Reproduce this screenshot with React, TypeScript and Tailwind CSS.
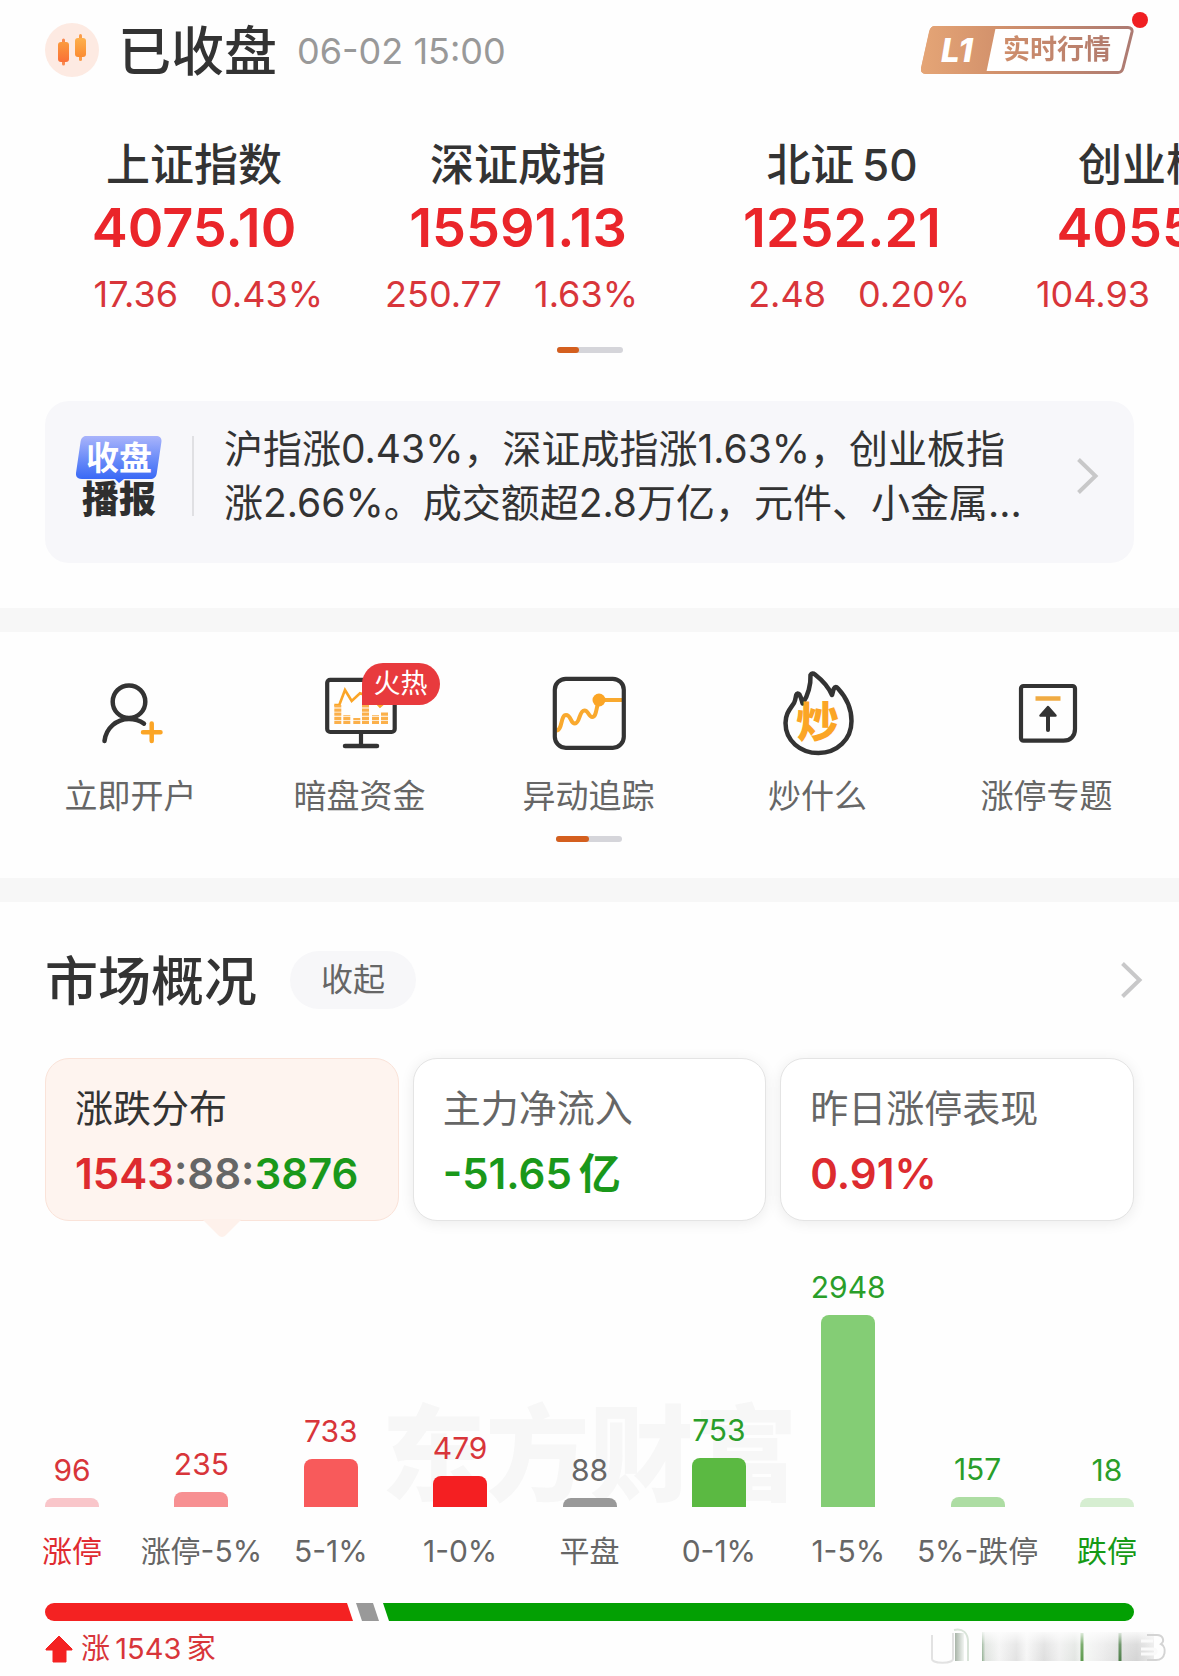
import clsx from "clsx";
import type { ReactNode } from "react";

const indices = [
  { name: "上证指数", value: "4075.10", change: "17.36", percent: "0.43%" },
  { name: "深证成指", value: "15591.13", change: "250.77", percent: "1.63%" },
  { name: "北证\u200950", value: "1252.21", change: "2.48", percent: "0.20%" },
  { name: "创业板指", value: "4055.78", change: "104.93", percent: "2.66%" },
];

const distribution = [
  { label: "涨停", count: 96, bar: "bg-[#f9c6ca]", text: "text-[#d8353a]", labelText: "text-[#e02b30]" },
  { label: "涨停-5%", count: 235, bar: "bg-[#f79092]", text: "text-[#d8353a]", labelText: "text-[#666]" },
  { label: "5-1%", count: 733, bar: "bg-[#f85a5b]", text: "text-[#d8353a]", labelText: "text-[#666]" },
  { label: "1-0%", count: 479, bar: "bg-[#f41f22]", text: "text-[#d8353a]", labelText: "text-[#666]" },
  { label: "平盘", count: 88, bar: "bg-[#999]", text: "text-[#666]", labelText: "text-[#666]" },
  { label: "0-1%", count: 753, bar: "bg-[#5bb942]", text: "text-[#2a9e2a]", labelText: "text-[#666]" },
  { label: "1-5%", count: 2948, bar: "bg-[#84cd75]", text: "text-[#2a9e2a]", labelText: "text-[#666]" },
  { label: "5%-跌停", count: 157, bar: "bg-[#addda3]", text: "text-[#2a9e2a]", labelText: "text-[#666]" },
  { label: "跌停", count: 18, bar: "bg-[#d6eed1]", text: "text-[#2a9e2a]", labelText: "text-[#159a15]" },
];

const MAX_BAR = 192;
const MIN_BAR = 9;
const maxCount = Math.max(...distribution.map((d) => d.count));

function barHeight(count: number) {
  return Math.max(MIN_BAR, Math.round((count / maxCount) * MAX_BAR));
}

function CandleIcon() {
  return (
    <svg width="54" height="54" viewBox="0 0 54 54" aria-hidden="true">
      <defs>
        <linearGradient id="candleA" x1="0" y1="0" x2="0" y2="1">
          <stop offset="0" stopColor="#fb9a3c" />
          <stop offset="1" stopColor="#fa7038" />
        </linearGradient>
        <linearGradient id="candleB" x1="0" y1="0" x2="0" y2="1">
          <stop offset="0" stopColor="#fdb04c" />
          <stop offset="1" stopColor="#fb8c32" />
        </linearGradient>
      </defs>
      <circle cx="27" cy="27" r="27" fill="#fdeae2" />
      <rect x="17" y="15.500" width="3" height="27" rx="1.500" fill="#f98a50" />
      <rect x="13" y="19" width="11" height="20" rx="3" fill="url(#candleA)" />
      <rect x="34" y="11" width="3" height="27" rx="1.500" fill="#fb9c48" />
      <rect x="30" y="15" width="11" height="19" rx="3" fill="url(#candleB)" />
    </svg>
  );
}

function Chevron() {
  return (
    <svg width="24" height="40" viewBox="0 0 24 40" fill="none" aria-hidden="true">
      <path d="M2.500 3.500 19.500 20 2.500 36.500" stroke="#c8c8c9" strokeWidth="4" />
    </svg>
  );
}

function OpenAccountIcon() {
  return (
    <svg width="92" height="92" viewBox="0 0 92 92" fill="none" strokeLinecap="round">
      <circle cx="44" cy="34.700" r="16.300" stroke="#333" strokeWidth="4.500" />
      <path d="M19.500 74C21 61 31.500 52 44 52c5.500 0 10.500 1.500 15 4.600" stroke="#333" strokeWidth="4.500" />
      <path d="M58 65.300h17.500M66.700 56.500v17.500" stroke="#fba526" strokeWidth="4.500" />
    </svg>
  );
}

function DarkPoolIcon() {
  return (
    <svg width="92" height="92" viewBox="0 0 92 92" fill="none">
      <rect x="13.200" y="12.800" width="67.500" height="52.200" rx="3" stroke="#333" strokeWidth="4.200" />
      <path d="M47 65v12" stroke="#333" strokeWidth="4.200" />
      <path d="M31 79h32" stroke="#333" strokeWidth="4.500" strokeLinecap="round" />
      <path d="M20.300 38h5L31 23l6.700 11 8.300-7.700L57 30l9 9.500 8-7" stroke="#fba526" strokeWidth="2.600" />
      <g stroke="#fbb04a" strokeWidth="7" strokeDasharray="3.200 0.900">
        <path d="M23.800 57V38" />
        <path d="M32.800 57v-9" />
        <path d="M42.800 57v-6" />
        <path d="M51.500 57V38" />
        <path d="M61.500 57v-9" />
        <path d="M70.500 57V45" />
      </g>
    </svg>
  );
}

function TrackIcon() {
  return (
    <svg width="92" height="92" viewBox="0 0 92 92" fill="none">
      <path
        d="M13.500 63.500c6 0 4-15.500 9.500-15.500s4 8.500 9 8.500 4-13 9.500-13c4 0 4 6.500 7.700 6.500C54 50 53 38 56.500 33H79"
        stroke="#f9a92e"
        strokeWidth="4"
      />
      <circle cx="56" cy="33" r="6.500" fill="#fba526" />
      <rect x="11.800" y="11.800" width="69" height="69" rx="11" stroke="#333" strokeWidth="4.200" />
    </svg>
  );
}

function FlameIcon() {
  return (
    <svg width="92" height="92" viewBox="0 0 92 92" fill="none">
      <path
        d="M38.500 8c1-1.800 2.600-2 4.500-.5C50 13 56.500 20 60 28c.8-2.500 1-4.500 2-6.500s2.500-1.800 3.800-.3C74 30 79.500 41 79.500 54c0 18.500-14.500 32-33 32S13.500 73.500 13.500 56c0-9.500 4.500-14 8.500-20 1.500-2.500 1.600-5.500 2.200-8 .6-2 2-2 3.200-.5 1.600 2.500 2.400 5.500 3.200 9C36 29 39 17 38.500 8Z"
        stroke="#333"
        strokeWidth="4.500"
        strokeLinejoin="round"
      />
      <text x="24" y="71" fontSize="43" fontWeight="900" fill="#fba526">
        炒
      </text>
    </svg>
  );
}

function LimitUpIcon() {
  return (
    <svg width="92" height="92" viewBox="0 0 92 92" fill="none">
      <path
        d="M22.500 19h49a2.500 2.500 0 0 1 2.500 2.500V62c0 7-4.500 11.700-11.500 11.700h-40a2.500 2.500 0 0 1-2.500-2.500v-49.700a2.500 2.500 0 0 1 2.500-2.500Z"
        stroke="#333"
        strokeWidth="4.200"
      />
      <path d="M34.500 31.500h25" stroke="#f0ab43" strokeWidth="4.500" />
      <path d="M47 46v17" stroke="#333" strokeWidth="4" strokeLinecap="round" />
      <path d="M47 40 39.500 48.500h15Z" fill="#333" stroke="#333" strokeWidth="2.500" strokeLinejoin="round" />
    </svg>
  );
}

const shortcuts = [
  { label: "立即开户", icon: OpenAccountIcon },
  { label: "暗盘资金", icon: DarkPoolIcon, badge: "火热" },
  { label: "异动追踪", icon: TrackIcon },
  { label: "炒什么", icon: FlameIcon },
  { label: "涨停专题", icon: LimitUpIcon },
];

function Pager({ half }: { half?: boolean }) {
  return (
    <div className="mx-auto h-1.5 w-[66px] overflow-hidden rounded-full bg-[#d5d5da]">
      <div className={clsx("h-full rounded-r-sm bg-[#d45f1e]", half ? "w-1/2" : "w-1/3")} />
    </div>
  );
}

function LevelOneButton() {
  return (
    <button type="button" className="relative flex h-12 w-[213px] items-center">
      <svg className="absolute inset-0" width="213" height="48" viewBox="0 0 213 48" fill="none" aria-hidden="true">
        <defs>
          <linearGradient id="copper" gradientUnits="userSpaceOnUse" x1="0" y1="0" x2="213" y2="0">
            <stop offset="0" stopColor="#e5a576" />
            <stop offset="0.350" stopColor="#d3926c" />
            <stop offset="1" stopColor="#ac7a72" />
          </linearGradient>
        </defs>
        <path
          d="M14 1.500h193c3 0 4.500 2 4 4.500l-9 36c-.8 3-2.200 4.500-5 4.500H5c-3 0-4.200-2-3.500-4.500l8-36c.7-3 2-4.500 4.500-4.500Z"
          fill="#fff"
          stroke="url(#copper)"
          strokeWidth="3"
        />
        <path d="M14 0h61L65 48H5c-4 0-5.600-2.500-5-5.500L8.500 5C9.300 1.500 11 0 14 0Z" fill="url(#copper)" />
      </svg>
      <span className="relative w-[82px] pl-5 text-left text-[33px] leading-8 font-extrabold text-white italic">L1</span>
      <span className="relative bg-linear-to-r from-[#cf8e6b] to-[#b27b6d] bg-clip-text text-[27px] leading-10 font-bold text-transparent">
        实时行情
      </span>
      <span className="absolute -top-3.5 -right-3.5 size-4 rounded-full bg-[#f01f22]" />
    </button>
  );
}

function ReportBadge() {
  return (
    <div className="relative h-20 w-[86px] shrink-0">
      <svg className="absolute inset-0" width="86" height="54" viewBox="0 0 86 54" aria-hidden="true">
        <defs>
          <linearGradient id="reportBlue" x1="0" y1="0" x2="0" y2="1">
            <stop offset="0" stopColor="#a9b4fb" />
            <stop offset="0.500" stopColor="#6a8bf8" />
            <stop offset="1" stopColor="#2f62f5" />
          </linearGradient>
        </defs>
        <path
          d="M10 0h70c4 0 6 2.500 5.400 6l-4.600 31c-.6 4-2.800 6-6.800 6H48l-5 4-4-4H6c-4 0-6.500-2-6-6L4.500 6C5 2.500 7 0 10 0Z"
          fill="url(#reportBlue)"
        />
      </svg>
      <div className="relative flex flex-col items-center">
        <span className="text-[33px] leading-[44px] font-bold text-white">收盘</span>
        <span className="text-[37px] leading-[40px] font-black text-[#2f2f2f]">播报</span>
      </div>
    </div>
  );
}

type StatCardProps = {
  title: string;
  active?: boolean;
  children: ReactNode;
};

function StatCard({ title, active, children }: StatCardProps) {
  return (
    <button
      type="button"
      className={clsx(
        "relative rounded-[24px] border pt-[25px] pb-[22px] pl-[29px] text-left",
        active
          ? "border-[#fae3d9] bg-[#fef4ef]"
          : "border-[#e4e4e4] bg-white shadow-[0_2px_14px_rgba(0,0,0,0.08)]"
      )}
    >
      <span className={clsx("block text-[38px] leading-[48px]", active ? "text-[#333]" : "text-[#666]")}>
        {title}
      </span>
      <span className="mt-[18px] block text-[42px] leading-[48px] font-semibold whitespace-nowrap">{children}</span>
      {active && (
        <svg className="absolute top-full left-1/2 -mt-px -translate-x-1/2" width="40" height="20" viewBox="0 0 40 20" aria-hidden="true">
          <path d="M0 0l16 16c2.500 2.500 5.500 2.500 8 0L40 0Z" fill="#fef1eb" />
        </svg>
      )}
    </button>
  );
}

// Blurred account signature in the lower right corner
function Signature() {
  return (
    <svg className="absolute right-2 bottom-2.5" width="242" height="40" viewBox="0 0 242 40" fill="none" aria-hidden="true">
      <defs>
        <linearGradient id="smear" x1="0" y1="0" x2="1" y2="0">
          <stop offset="0" stopColor="#8fae8f" />
          <stop offset="0.020" stopColor="#dfe3df" />
          <stop offset="0.100" stopColor="#f4f4f4" />
          <stop offset="0.200" stopColor="#e2e2e2" />
          <stop offset="0.260" stopColor="#f6f6f6" />
          <stop offset="0.360" stopColor="#dedede" />
          <stop offset="0.450" stopColor="#f0f0f0" />
          <stop offset="0.540" stopColor="#e2e5e2" />
          <stop offset="0.590" stopColor="#f6f8f6" />
          <stop offset="0.680" stopColor="#eeeeee" />
          <stop offset="0.780" stopColor="#e2e2e2" />
          <stop offset="0.900" stopColor="#d4d4d4" />
          <stop offset="1" stopColor="#ebebeb" />
        </linearGradient>
        <linearGradient id="smearFade" x1="0" y1="0" x2="0" y2="1">
          <stop offset="0" stopColor="#fefefe" stopOpacity="0.900" />
          <stop offset="0.450" stopColor="#fefefe" stopOpacity="0.200" />
          <stop offset="1" stopColor="#fefefe" stopOpacity="0" />
        </linearGradient>
        <linearGradient id="stem" x1="0" y1="0" x2="1" y2="0">
          <stop offset="0" stopColor="#a9b5a9" />
          <stop offset="1" stopColor="#f2f5f2" />
        </linearGradient>
      </defs>
      <path d="M3 8v24c0 5 21 5 21 0V6" fill="#fefefe" stroke="#e2e2e2" strokeWidth="2" />
      <rect x="26" y="6" width="9" height="28" fill="url(#stem)" />
      <path d="M25 3c9-2 14 3 14 12v19" stroke="#d9e4d9" strokeWidth="2" />
      <rect x="53" y="5" width="172" height="29" fill="url(#smear)" />
      <path d="M153 6v28" stroke="#5c9a4c" strokeWidth="3" />
      <path d="M191 6v28" stroke="#4f7f4a" strokeWidth="3" />
      <rect x="53" y="4" width="172" height="30" fill="url(#smearFade)" />
      <path d="M218 8h10c6 0 8 6 4 9 6 3 5 16-5 16h-9" stroke="#d4d4d4" strokeWidth="2" />
      <path d="M212 14h12M212 22h12c4 0 4 5 0 5h-12" stroke="#fafafa" strokeWidth="3" />
    </svg>
  );
}

export default function App() {
  return (
    <main className="relative min-h-screen overflow-hidden bg-[#fefefe] font-[Inter,'Noto_Sans_CJK_SC',sans-serif] text-[#333]">
      {/* 行情 */}
      <header className="flex items-center justify-between px-[45px] pt-[23px]">
        <div className="flex h-[54px] items-center">
          <CandleIcon />
          <h1 className="ml-[19px] pt-1 text-[53px] leading-[54px] font-medium">已收盘</h1>
          <time className="ml-5 pt-0.5 text-[36px] leading-[54px] text-[#999]">06-02 15:00</time>
        </div>
        <LevelOneButton />
      </header>

      <section className="mt-[60px] flex pl-8">
        {indices.map((item) => (
          <a key={item.name} href="#" className="w-[324px] shrink-0 text-center">
            <h2 className="text-[44px] leading-[56px] font-medium">{item.name}</h2>
            <p className="mt-[7px] text-[54px] leading-[56px] font-semibold text-[#ea252a]">{item.value}</p>
            <div className="mt-[18px] grid grid-cols-2 gap-8 text-[36px] leading-[40px] text-[#d8353a]">
              <span className="text-right">{item.change}</span>
              <span className="text-left">{item.percent}</span>
            </div>
          </a>
        ))}
      </section>

      <div className="mt-[33px]">
        <Pager />
      </div>

      <a href="#" className="mx-[45px] mt-12 flex h-[162px] items-center rounded-[24px] bg-[#f7f7fa] pr-[34px] pb-3 pl-[31px]">
        <ReportBadge />
        <div className="ml-[30px] h-20 w-0.5 shrink-0 bg-[#e0e0e3]" />
        <p className="ml-[30px] flex-1 text-[39px] leading-[54px] whitespace-nowrap">
          沪指涨0.43%，深证成指涨1.63%，创业板指
          <br />
          涨2.66%。成交额超2.8万亿，元件、小金属...
        </p>
        <Chevron />
      </a>

      <div className="mt-[45px] h-6 bg-[#f7f7f7]" />

      {/* 快捷入口 */}
      <nav className="pt-[35px] pr-[18px] pb-9 pl-4">
        <div className="grid grid-cols-5">
          {shortcuts.map((item) => {
            const Icon = item.icon;

            return (
              <a key={item.label} href="#" className="flex flex-col items-center">
                <span className="relative">
                  <Icon />
                  {item.badge && (
                    <span className="absolute -top-1 left-12 rounded-full rounded-bl-none bg-[#e83a3d] px-3 text-[27px] leading-[42px] whitespace-nowrap text-white">
                      {item.badge}
                    </span>
                  )}
                </span>
                <span className="mt-[17px] text-[33px] leading-[40px] text-[#666]">{item.label}</span>
              </a>
            );
          })}
        </div>
        <div className="mt-5">
          <Pager half />
        </div>
      </nav>

      <div className="h-6 bg-[#f7f7f7]" />

      {/* 市场概况 */}
      <section className="px-[45px] pt-[49px] pb-2">
        <div className="flex h-[58px] items-center">
          <h2 className="pt-1 text-[53px] leading-[58px] font-medium">市场概况</h2>
          <button type="button" className="ml-[33px] h-[58px] rounded-full bg-[#f7f7f9] px-[31px] text-[32px] text-[#666]">
            收起
          </button>
          <a href="#" aria-label="市场概况" className="-mr-2.5 ml-auto">
            <Chevron />
          </a>
        </div>

        <div className="mt-[49px] grid grid-cols-3 gap-3.5">
          <StatCard title="涨跌分布" active>
            <span className="text-[#dd2b2f]">1543</span>
            <span className="text-[#666]">:88:</span>
            <span className="text-[#1a981a]">3876</span>
          </StatCard>
          <StatCard title="主力净流入">
            <span className="text-[#1a981a]">-51.65{"\u2009"}亿</span>
          </StatCard>
          <StatCard title="昨日涨停表现">
            <span className="text-[#dd2b2f]">0.91%</span>
          </StatCard>
        </div>

        <div className="relative mt-[46px]">
          <div className="absolute inset-x-0 bottom-16 text-center text-[104px] leading-[104px] font-black text-[#f7f7f7]">
            东方财富
          </div>
          <div className="relative flex items-end justify-between">
            {distribution.map((item) => (
              <div key={item.label} className="flex w-[54px] flex-col items-center whitespace-nowrap">
                <span className={clsx("text-[30px] leading-[40px]", item.text)}>{item.count}</span>
                <div
                  className={clsx("mt-2 w-full rounded-t-lg", item.bar)}
                  style={{ height: barHeight(item.count) }}
                />
                <span className={clsx("mt-6 text-[30px] leading-[40px]", item.labelText)}>{item.label}</span>
              </div>
            ))}
          </div>
        </div>

        <svg className="mt-8 h-[18px] w-full rounded-full" viewBox="0 0 1089 18" preserveAspectRatio="none" aria-hidden="true">
          <path d="M0 0h302l6 18H0Z" fill="#f42222" />
          <path d="M311 0h17l6 18h-17Z" fill="#999" />
          <path d="M338 0h751v18H344Z" fill="#03a003" />
        </svg>

        <div className="mt-2 flex h-10 items-center gap-2 text-[29px] leading-[40px] text-[#d8353a]">
          <svg width="28" height="28" viewBox="0 0 28 28" aria-hidden="true">
            <path d="M14 1 27 14v1h-6v12H8V15H1v-1Z" fill="#f42222" stroke="#f42222" strokeLinejoin="round" />
          </svg>
          <span>涨{"\u2009"}1543{"\u2009"}家</span>
        </div>
      </section>

      <Signature />
    </main>
  );
}
